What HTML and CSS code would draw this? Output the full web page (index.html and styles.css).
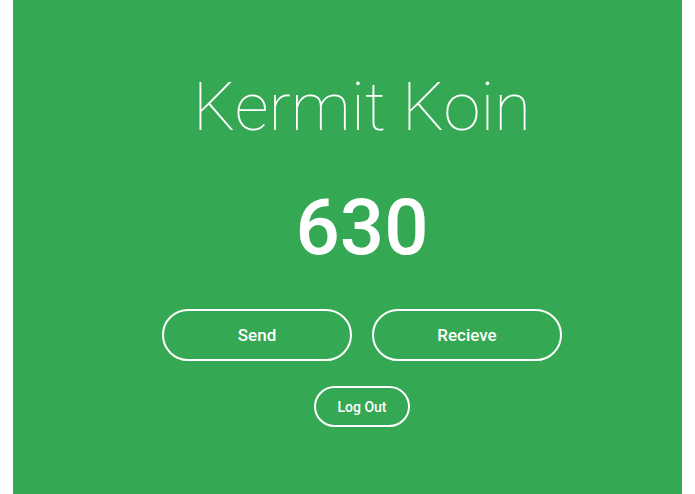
FILE: index.html
```html
<!DOCTYPE html>
<html lang="en">
<head>
<meta charset="utf-8">
<title>Kermit Koin</title>
<link rel="stylesheet" href="styles.css">
</head>
<body>
<main class="page">
  <h1 class="title">Kermit Koin</h1>
  <div class="balance">630</div>
  <div class="actions">
    <button class="btn btn-lg">Send</button>
    <button class="btn btn-lg">Recieve</button>
  </div>
  <button class="btn btn-sm">Log Out</button>
</main>
</body>
</html>
```

FILE: styles.css
```css
html, body {
  margin: 0;
  padding: 0;
  background: #ffffff;
}

.page {
  margin: 0 13px;
  height: 494px;
  box-sizing: border-box;
  background: #34a853;
  display: flex;
  flex-direction: column;
  align-items: center;
  padding-top: 74px;
  padding-left: 29px;
  color: #ffffff;
  font-family: Roboto, "Noto Sans", sans-serif;
}

.title {
  margin: 0;
  font-size: 67px;
  line-height: 1;
  font-weight: 100;
}

.balance {
  margin-top: 48px;
  font-size: 78px;
  line-height: 1;
  font-weight: 500;
}

.actions {
  margin-top: 42px;
  display: flex;
  gap: 20px;
}

.btn {
  background: transparent;
  color: #ffffff;
  border: 2px solid #ffffff;
  border-radius: 999px;
  font-family: Roboto, "Noto Sans", sans-serif;
  font-weight: 500;
  padding: 0;
  cursor: pointer;
}

.btn-lg {
  width: 190px;
  height: 52px;
  font-size: 17px;
}

.btn-sm {
  margin-top: 25px;
  width: 96px;
  height: 41px;
  font-size: 14px;
}
```
